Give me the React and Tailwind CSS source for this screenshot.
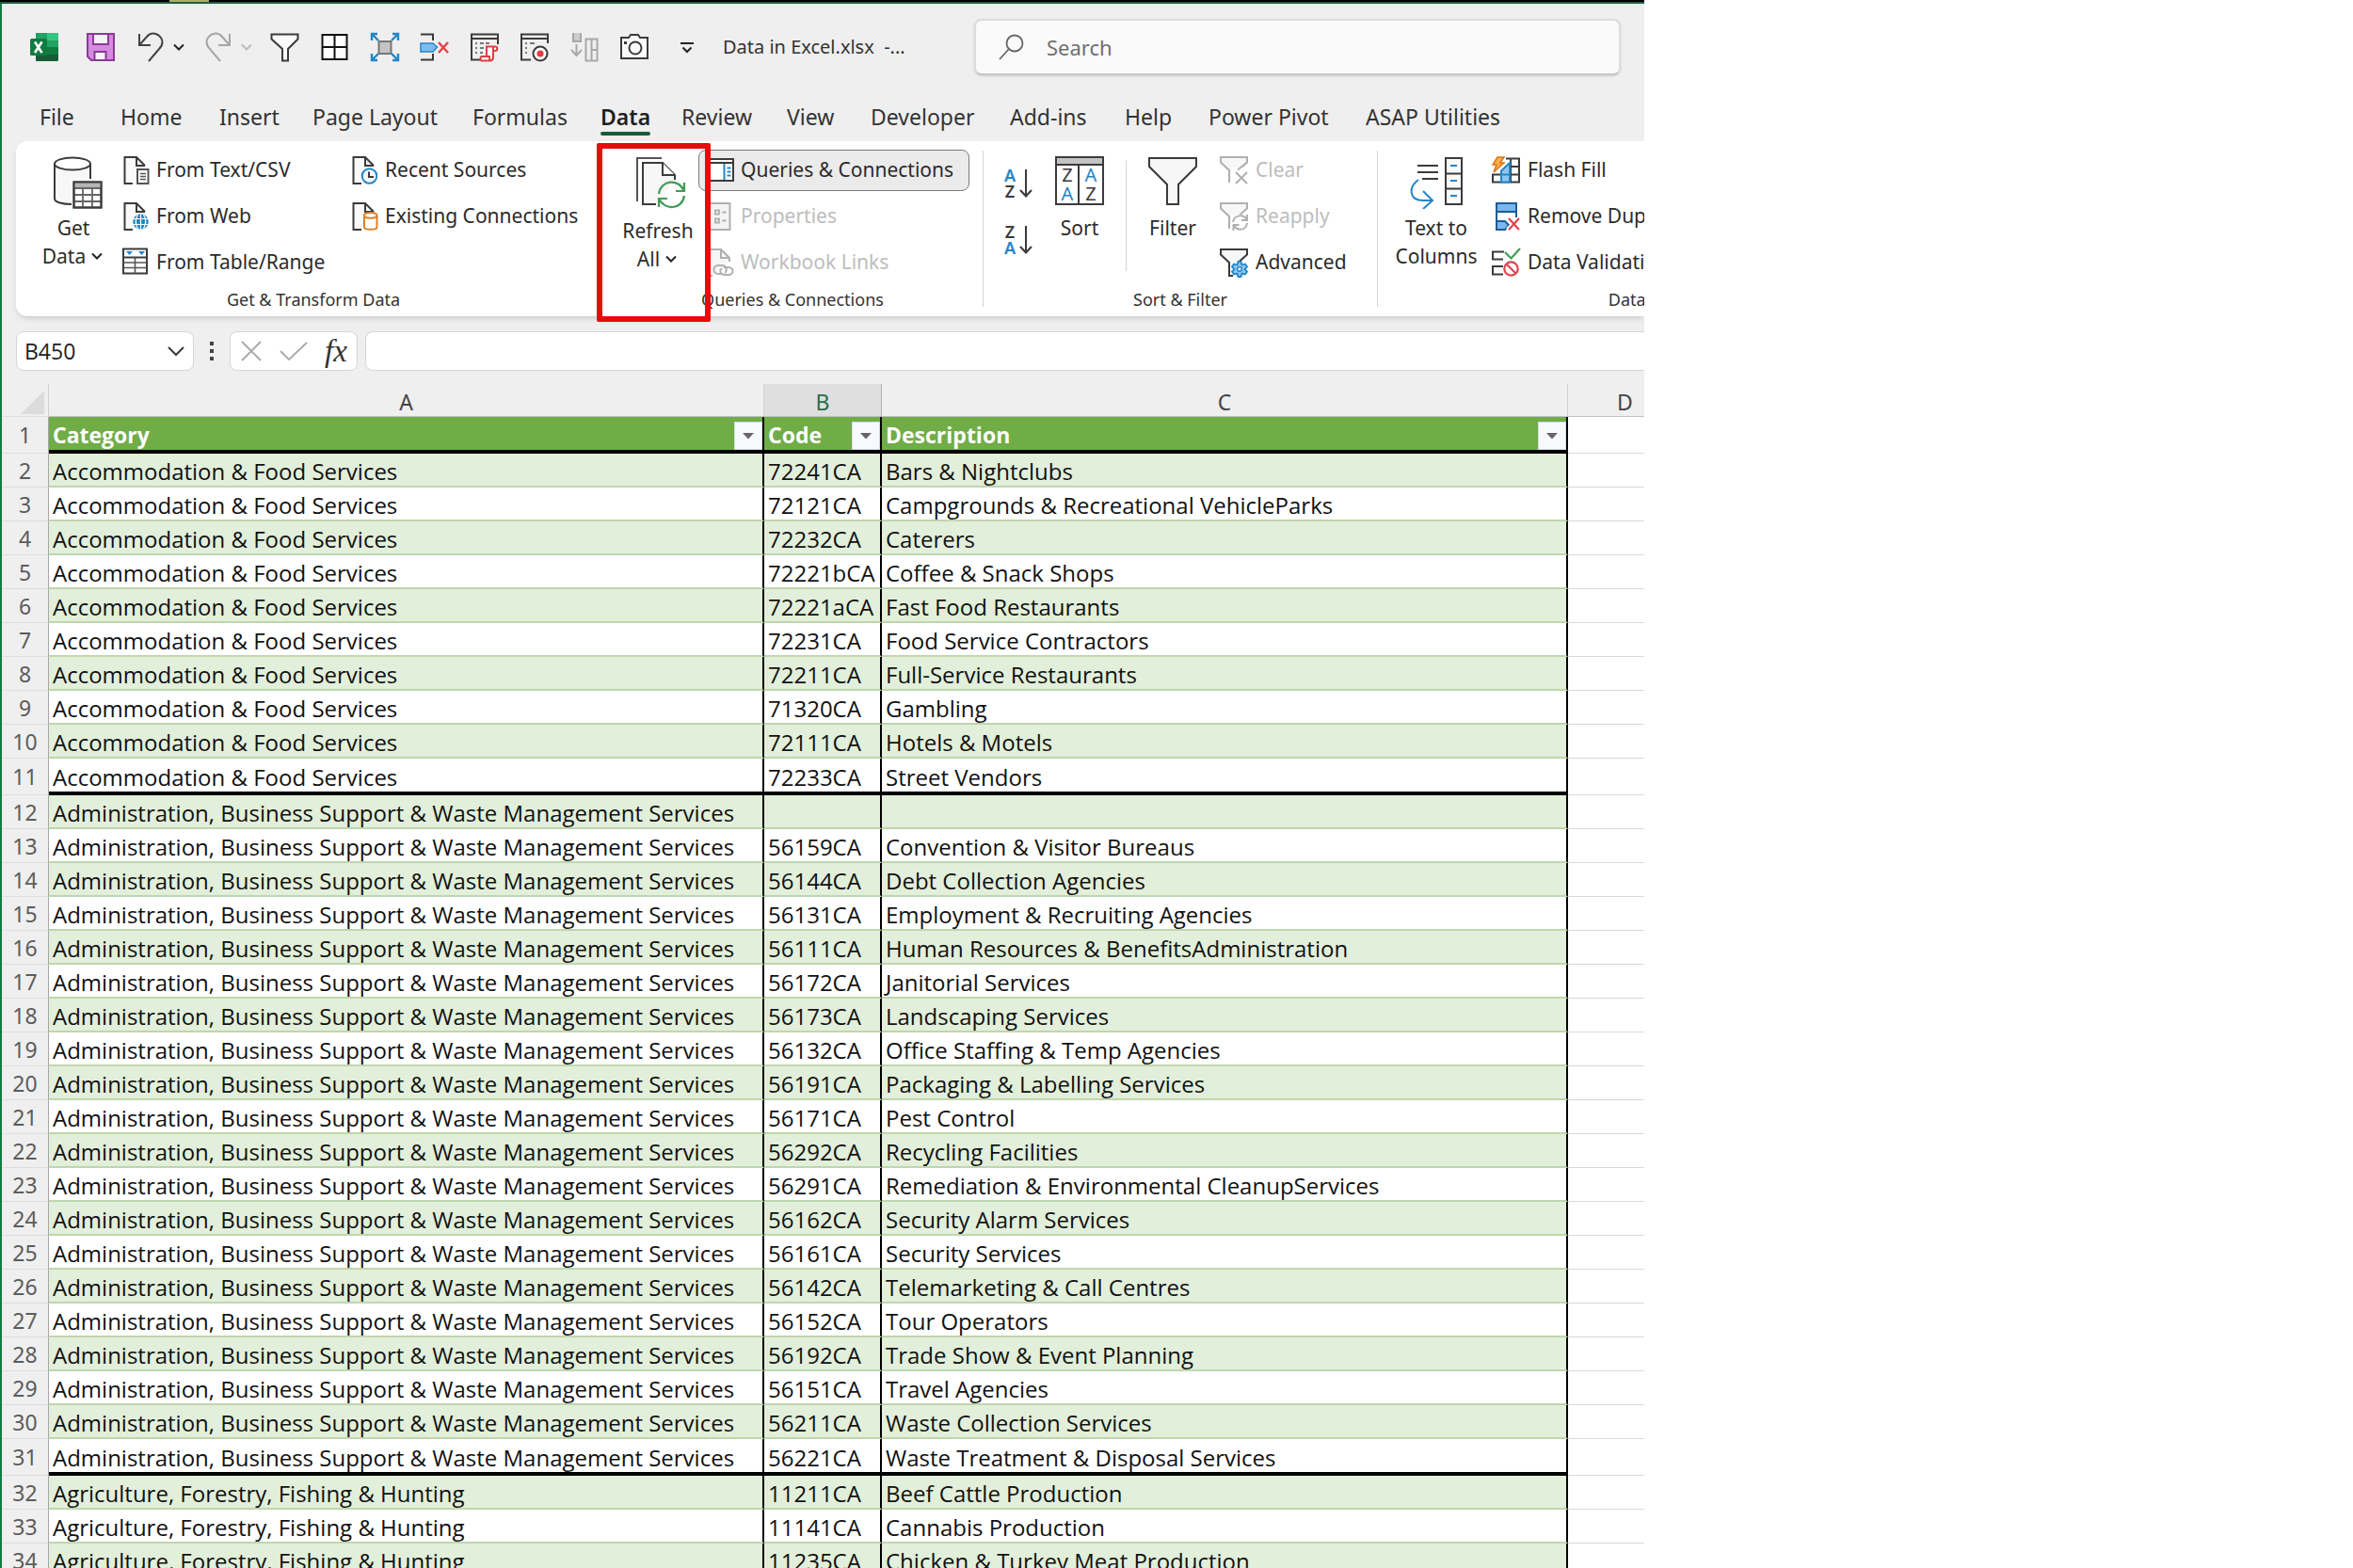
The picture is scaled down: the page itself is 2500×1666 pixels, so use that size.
import React from "react";

const INK = "#3b3b3b";
const BLUE = "#2485c7";
const GREY = "#b0b0b0";

function Svg({ w = 32, h = 32, children, className = "", sw = 2 }) {
  return (
    <svg
      width={w}
      height={h}
      viewBox={`0 0 ${w} ${h}`}
      fill="none"
      stroke={INK}
      strokeWidth={sw}
      className={"shrink-0 " + className}
      aria-hidden="true"
    >
      {children}
    </svg>
  );
}

const Chevron = ({ color = "#222", w = 16, sw = 2 }) => (
  <Svg w={w} h={10} sw={sw}>
    <path d={`M${w / 2 - 5} 2.5l5 5 5-5`} stroke={color} />
  </Svg>
);

/* ---------- title bar icons ---------- */

const ExcelLogo = () => (
  <Svg sw={0}>
    <path d="M8 1h22a1 1 0 0 1 1 1v28a1 1 0 0 1-1 1H8a1 1 0 0 1-1-1V2a1 1 0 0 1 1-1z" fill="#185c37" />
    <path d="M7 1h12v8H7z" fill="#21a366" />
    <path d="M19 1h11a1 1 0 0 1 1 1v7H19z" fill="#33c481" />
    <path d="M7 9h12v7H7z" fill="#107c41" />
    <path d="M19 9h12v7H19z" fill="#21a366" />
    <path d="M19 16h12v8H19z" fill="#107c41" />
    <rect x="1" y="7" width="18" height="18" rx="1.5" fill="#107c41" />
    <path d="M6 10.500l7.500 11.500M13.500 10.500L6 22" stroke="#fff" strokeWidth="2.600" />
  </Svg>
);

const SaveIcon = () => (
  <Svg>
    <path d="M2 2h28v28H6l-4-4z" fill="#d58be0" stroke="#8a3a96" />
    <path d="M8 2h16v11H8zM9.500 30v-9h12v9z" fill="#f6f0f8" stroke="#8a3a96" />
  </Svg>
);

const UndoIcon = () => (
  <Svg>
    <path d="M4 2v12h12M4 14L12 5c5-6 12-3 15 1 3 5 1 9-2 12L14 31" stroke="#444" />
  </Svg>
);

const RedoIcon = () => (
  <Svg>
    <path d="M28 2v12H16M28 14L20 5C15-1 8 2 5 6c-3 5-1 9 2 12l11 13" stroke="#a6a6a6" />
  </Svg>
);

const FunnelIcon = () => (
  <Svg>
    <path d="M1.500 2.500h28v5L19 18v12.500h-6V18L1.500 7.500z" fill="#fafafa" />
  </Svg>
);

const BordersIcon = () => (
  <Svg>
    <path d="M2.500 3h26v26h-26zM15.500 3v26M2.500 16h26" stroke="#111" fill="#fff" />
  </Svg>
);

const ExpandIcon = () => (
  <Svg>
    <rect x="9.500" y="10" width="13" height="13" fill="#c4c4c4" stroke="#777" />
    <path
      d="M2 9V2h6M2 2l7 7M30 9V2h-6M30 2l-7 7M2 23v7h6M2 30l7-7M30 23v7h-6M30 30l-7-7"
      stroke={BLUE}
      strokeWidth="2.400"
    />
  </Svg>
);

const DeleteRowIcon = () => (
  <Svg>
    <path d="M1 2.500h13V9M1 29.500h13V23" />
    <path d="M1 12h13l4.500 4-4.500 5H1z" fill="#7fbcec" stroke={BLUE} strokeWidth="1.500" />
    <path d="M20 11l10 11M30 11L20 22" stroke="#e0434b" strokeWidth="2.400" />
  </Svg>
);

const SheetBase = () => (
  <>
    <path d="M12 29.500H2v-27h28V13M2 7h28" />
    <path d="M6 12h2M11 12h4M17 12h4M6 17h2M11 17h4M6 22h2M11 22h3" stroke="#777" />
  </>
);

const MacroIcon = () => (
  <Svg>
    <SheetBase />
    <path d="M18 26V15.500h9c3 0 3 4.500 0 4.500h-2v7c0 3-3 3.500-3 3.500h-9c-2 0-2-4.500 0-4.500h8c0 2 0 4 1 4.500M25 20v-4" stroke="#dd3f45" fill="#fff" />
  </Svg>
);

const RecordIcon = () => (
  <Svg>
    <path d="M12 29.500H2v-27h28V12M2 7h28" />
    <path d="M6 12h2M11 12h5M6 17h2M6 22h2" stroke="#777" />
    <circle cx="22" cy="23" r="7.500" fill="#fff" />
    <circle cx="22" cy="23" r="3.600" fill="#dd3f45" stroke="none" />
  </Svg>
);

const FillDownIcon = () => (
  <Svg>
    <path d="M4 1v9h8V1" fill="#ccc" stroke="#a8a8a8" />
    <path d="M7.500 13v11M2 19l5.500 6 5.500-6M17.500 7.500h12v23h-12zM23.500 7.500v23M23.500 19h6" stroke="#a8a8a8" />
  </Svg>
);

const CameraIcon = () => (
  <Svg>
    <path d="M2 6h8l2-3h8l2 3h8v22H2z" fill="#fafafa" />
    <circle cx="17" cy="17" r="6.500" />
    <rect x="5" y="10" width="3" height="3" fill={INK} stroke="none" />
  </Svg>
);

const CustomizeIcon = () => (
  <Svg w={16} h={16}>
    <path d="M1 4h14M3.500 8.500l4.500 4.500 4.500-4.500" stroke="#222" />
  </Svg>
);

/* ---------- ribbon icons ---------- */

const Doc = ({ color = INK }) => (
  <>
    <path d="M11 30H2.500V2H15l9 9" fill="#fafafa" stroke={color} />
    <path d="M15 2v9h9" stroke={color} />
  </>
);

const TextCsvIcon = () => (
  <Svg>
    <Doc />
    <rect x="16" y="15" width="11.500" height="15" fill="#fff" stroke="#555" />
    <path d="M19 19.500h6M19 22.500h6M19 25.500h6" stroke="#555" strokeWidth="1.300" />
  </Svg>
);

const WebIcon = () => (
  <Svg>
    <Doc />
    <circle cx="19.500" cy="21.500" r="9.500" fill="#fff" stroke="none" />
    <circle cx="19.500" cy="21.500" r="8.300" fill={BLUE} stroke="none" />
    <path
      d="M11.500 18.500h16M11.500 24.500h16M19.500 13v17M16.500 14c-3 5-3 10 0 15M22.500 14c3 5 3 10 0 15"
      stroke="#fff"
      strokeWidth="1.200"
    />
  </Svg>
);

const TableRangeIcon = () => (
  <Svg sw={1.6}>
    <path d="M1 1.500h25v26H1z" fill="#fff" strokeWidth="2" />
    <path d="M1 10.500h25" strokeWidth="2" />
    <path d="M1 16h25M1 21.500h25M13.500 10.500v17" stroke="#555" />
    <path d="M4 4h7l-3.500 4zM17 4h7l-3.500 4z" fill={BLUE} stroke="none" />
  </Svg>
);

const RecentIcon = () => (
  <Svg>
    <Doc />
    <circle cx="19.500" cy="22" r="9" fill="#fff" stroke="none" />
    <circle cx="19.500" cy="22" r="7.800" fill="#f3f9ff" stroke={BLUE} />
    <path d="M19 17.500V23h5" />
  </Svg>
);

const ConnectionsIcon = () => (
  <Svg>
    <Doc />
    <path
      d="M14 15c0-4 13.500-4 13.500 0v12.500c0 3-13.500 3-13.500 0z"
      fill="#fff"
      stroke="#d9822b"
    />
    <path d="M14 15c0 3.500 13.500 3.500 13.500 0" stroke="#d9822b" />
  </Svg>
);

const GetDataIcon = () => (
  <Svg w={56} h={56} className="ml-2">
    <path d="M4 7v39c0 4 9 6 18 5V26h20V7" fill="#f7f7f7" stroke="none" />
    <ellipse cx="23" cy="8" rx="19" ry="6.500" fill="#fff" />
    <path d="M4 8v37c0 4 9 6 18 6M42 8v16" />
    <rect x="24.500" y="27.500" width="29" height="27" fill="#fff" />
    <path d="M25 28h28v5H25z" fill="#b5b5b5" stroke="none" />
    <path d="M24 34h30M24 41h30M24 48h30M34 34v20M44 34v20" stroke="#666" strokeWidth="1.800" />
    <rect x="24.500" y="27.500" width="29" height="27" />
  </Svg>
);

const RefreshIcon = () => (
  <Svg w={56} h={56} className="ml-1">
    <path d="M4 48V2h26" stroke="#555" />
    <path d="M24 51H10V7h21l13 13v5" fill="#f7f7f7" />
    <path d="M31 7v13h13" fill="#fff" />
    <path
      d="M27 40c2-15 21-17 27-3M54 28v9h-9M54 42c-2 15-21 16-27 3M27 54v-9h9"
      stroke="#3f9b56"
      strokeWidth="2.200"
      fill="none"
    />
  </Svg>
);

const PaneIcon = () => (
  <Svg>
    <path d="M1 4h27v23H1z" fill="#fff" />
    <path d="M1 8h27" />
    <path d="M18.500 9v17" stroke={BLUE} />
    <path d="M21.500 13.500h4M21.500 17.500h4M21.500 21.500h4" stroke={BLUE} />
  </Svg>
);

const PropertiesIcon = () => (
  <Svg>
    <path d="M2 2h22.500v28H2z" fill="#f4f4f4" stroke={GREY} />
    <path d="M9 9.500h4v4H9zM9 18.500h4v4H9zM16.500 11.500h4M16.500 20.500h4" stroke={GREY} strokeWidth="1.800" />
  </Svg>
);

const LinksIcon = () => (
  <Svg>
    <path d="M6 30H2V2h13l9 9v4" fill="#f6f6f6" stroke={GREY} />
    <path d="M15 2v9h9" stroke={GREY} />
    <path d="M17 28h-5c-6 0-6-9 0-9h4c5 0 6 6 3 8M18 21h5c6 0 6 8 0 8h-4c-5 0-6-5-3-7" stroke={GREY} />
  </Svg>
);

/* The sort icons carry live letters beside the arrow. */
const SortOrder = ({ top, bottom, topClass, bottomClass }) => (
  <span className="flex items-center gap-1">
    <span className="flex flex-col text-[18px] leading-[17px] font-semibold">
      <span className={topClass}>{top}</span>
      <span className={bottomClass}>{bottom}</span>
    </span>
    <Svg w={14} h={32}>
      <path d="M7 1v28M1 23l6 6.500 6-6.500" />
    </Svg>
  </span>
);

const SortDialogIcon = () => (
  <span className="flex h-13 w-13 flex-col border-2 border-[#3b3b3b] bg-white">
    <span className="h-2 border-b-2 border-[#3b3b3b] bg-[#c4c4c4]" />
    <span className="grid flex-1 grid-cols-2 text-center text-[20px] leading-5 text-[#3b3b3b]">
      <span className="flex flex-col border-r-2 border-[#3b3b3b]">
        <span>Z</span>
        <span className="text-[#2485c7]">A</span>
      </span>
      <span className="flex flex-col">
        <span className="text-[#2485c7]">A</span>
        <span>Z</span>
      </span>
    </span>
  </span>
);

const BigFunnelIcon = () => (
  <Svg w={56} h={56}>
    <path d="M3 2h50v9L34 30v21H22V30L3 11z" fill="#f7f7f7" />
  </Svg>
);

const SmallFunnel = ({ color }) => (
  <path d="M11 29V16L2 7.500V2h28v5.500l-9 8" fill="#f7f7f7" stroke={color} />
);

const ClearIcon = () => (
  <Svg>
    <SmallFunnel color={GREY} />
    <path d="M13 13h14v17H13z" fill="#fff" stroke="none" />
    <path d="M30 7.500l-10 8M18 18l12 12M30 18L18 30" stroke={GREY} />
  </Svg>
);

const ReapplyIcon = () => (
  <Svg>
    <SmallFunnel color={GREY} />
    <path d="M13 14h18v17H13z" fill="#fff" stroke="none" />
    <path d="M15 22c1-8 12-9 15-2M30 14v6h-6M30 23c-1 8-11 9-14 2M15.500 31v-6h6" stroke={GREY} />
  </Svg>
);

const AdvancedIcon = () => (
  <Svg>
    <SmallFunnel color={INK} />
    <path d="M13 14h18v17H13z" fill="#fff" stroke="none" />
    <path d="M11 17v13h4" />
    <path
      d="M20.500 15h3l1 3.500 3.500-1 2 3-2.500 2.500 2.500 2.500-2 3-3.500-1-1 3.500h-3l-1-3.500-3.500 1-2-3 2.500-2.500-2.500-2.500 2-3 3.500 1z"
      fill="#8cc5f0"
      stroke={BLUE}
      strokeWidth="1.800"
    />
    <circle cx="22" cy="23" r="2.200" fill="#fff" stroke={BLUE} strokeWidth="1.500" />
  </Svg>
);

const TextToColumnsIcon = () => (
  <Svg w={60} h={56}>
    <path d="M10 10h22M10 17h22M15 24h17" />
    <path d="M11 25C0 33 1 47 16 47h9M16 37l10 10-10 9" stroke={BLUE} />
    <path d="M40 2h17v49H40zM40 18.500h17M40 34.500h17" fill="#fafafa" />
    <path d="M45 10h7M45 26h7M45 42h7" stroke={BLUE} />
  </Svg>
);

const FlashFillIcon = () => (
  <Svg>
    <path d="M16 3.500h14v25H2v-8h28M21 3.500v25M11 20v8M21 12h9" fill="none" />
    <path d="M11 28.500v-12L20 8v20.500z" fill="#8cc5f0" stroke={BLUE} />
    <path d="M11 20.500h10" stroke={BLUE} />
    <path d="M7 2h7l-4 6h4L3 18l3-8H2z" fill="#f7b04a" stroke="#d9761b" strokeWidth="1.500" />
  </Svg>
);

const RemoveDupIcon = () => (
  <Svg>
    <path d="M6 2h21v9H6z" fill="#78b8ef" stroke="#1f5c94" />
    <path d="M27 11v6M6 11v10" stroke="#1f5c94" />
    <path d="M6 21h9l4 4-4 5H6z" fill="#78b8ef" stroke="#1f5c94" />
    <path d="M18 18l13 12M31 18L18 30" stroke="#fff" strokeWidth="5" />
    <path d="M19 18l11 12M30 18L19 30" stroke="#e0434b" strokeWidth="2.200" />
  </Svg>
);

const ValidationIcon = () => (
  <Svg>
    <path d="M14 4.500H2v8h11M13 20H2v8.500h11" />
    <path d="M15 5l6.500 6.500L31 1" stroke="#3f9b56" strokeWidth="2.200" />
    <circle cx="21.500" cy="22.500" r="7.200" stroke="#e0434b" strokeWidth="2.200" fill="#fff" />
    <path d="M16.500 17.500l10 10" stroke="#e0434b" strokeWidth="2.200" />
  </Svg>
);

/* ---------- ribbon pieces ---------- */

function RibbonGroup({ label, className, children }) {
  return (
    <section className={"flex shrink-0 flex-col " + className} aria-label={label}>
      <div className="flex h-[150px] items-start">{children}</div>
      <h2 className="h-9 text-center text-[18px] leading-9 text-[#333]">{label}</h2>
    </section>
  );
}

function SmallButton({ icon, children, disabled, active, gap = "gap-1", pad = "" }) {
  return (
    <button
      type="button"
      disabled={disabled}
      className={
        "flex h-11 items-center text-[21px] whitespace-nowrap " +
        gap +
        " " +
        pad +
        (disabled ? " text-[#bdbdbd]" : " text-[#2b2b2b]") +
        (active ? " rounded-lg border border-[#7a7a7a] bg-[#ebebeb]" : "")
      }
    >
      {icon}
      {children}
    </button>
  );
}

const Stack = ({ className, children }) => (
  <div className={"grid shrink-0 grid-rows-[49px_49px_49px] items-center pt-1.5 " + className}>{children}</div>
);

function BigButton({ icon, className, textClass = "mt-[5px]", children }) {
  return (
    <button
      type="button"
      className={"flex shrink-0 flex-col items-center pt-4 text-[21px] leading-[30px] text-[#2b2b2b] " + className}
    >
      {icon}
      <span className={"block whitespace-nowrap " + textClass}>{children}</span>
    </button>
  );
}

/* ---------- sheet data ---------- */

const FOOD = "Accommodation & Food Services";
const ADMIN = "Administration, Business Support & Waste Management Services";
const AGRI = "Agriculture, Forestry, Fishing & Hunting";

const ROWS = [
  [FOOD, "72241CA", "Bars & Nightclubs"],
  [FOOD, "72121CA", "Campgrounds & Recreational VehicleParks"],
  [FOOD, "72232CA", "Caterers"],
  [FOOD, "72221bCA", "Coffee & Snack Shops"],
  [FOOD, "72221aCA", "Fast Food Restaurants"],
  [FOOD, "72231CA", "Food Service Contractors"],
  [FOOD, "72211CA", "Full-Service Restaurants"],
  [FOOD, "71320CA", "Gambling"],
  [FOOD, "72111CA", "Hotels & Motels"],
  [FOOD, "72233CA", "Street Vendors"],
  [ADMIN, "", ""],
  [ADMIN, "56159CA", "Convention & Visitor Bureaus"],
  [ADMIN, "56144CA", "Debt Collection Agencies"],
  [ADMIN, "56131CA", "Employment & Recruiting Agencies"],
  [ADMIN, "56111CA", "Human Resources & BenefitsAdministration"],
  [ADMIN, "56172CA", "Janitorial Services"],
  [ADMIN, "56173CA", "Landscaping Services"],
  [ADMIN, "56132CA", "Office Staffing & Temp Agencies"],
  [ADMIN, "56191CA", "Packaging & Labelling Services"],
  [ADMIN, "56171CA", "Pest Control"],
  [ADMIN, "56292CA", "Recycling Facilities"],
  [ADMIN, "56291CA", "Remediation & Environmental CleanupServices"],
  [ADMIN, "56162CA", "Security Alarm Services"],
  [ADMIN, "56161CA", "Security Services"],
  [ADMIN, "56142CA", "Telemarketing & Call Centres"],
  [ADMIN, "56152CA", "Tour Operators"],
  [ADMIN, "56192CA", "Trade Show & Event Planning"],
  [ADMIN, "56151CA", "Travel Agencies"],
  [ADMIN, "56211CA", "Waste Collection Services"],
  [ADMIN, "56221CA", "Waste Treatment & Disposal Services"],
  [AGRI, "11211CA", "Beef Cattle Production"],
  [AGRI, "11141CA", "Cannabis Production"],
  [AGRI, "11235CA", "Chicken & Turkey Meat Production"],
];

const TABS = [
  "File", "Home", "Insert", "Page Layout", "Formulas", "Data", "Review", "View",
  "Developer", "Add-ins", "Help", "Power Pivot", "ASAP Utilities",
];

const QUICK = [
  ["Filter", FunnelIcon],
  ["Borders", BordersIcon],
  ["Select current region", ExpandIcon],
  ["Delete rows", DeleteRowIcon],
  ["Macros", MacroIcon],
  ["Record macro", RecordIcon],
  ["Fill down", FillDownIcon],
  ["Camera", CameraIcon],
];

function TitleBar() {
  return (
    <header className="flex h-[88px] items-center pl-[29px]">
      <ExcelLogo />
      <button type="button" aria-label="Save" className="ml-7"><SaveIcon /></button>
      <button type="button" aria-label="Undo" className="ml-[21px] flex items-center gap-1.5">
        <UndoIcon />
        <Chevron />
      </button>
      <button type="button" aria-label="Redo" className="ml-[18px] flex items-center gap-1.5">
        <RedoIcon />
        <Chevron color="#bbb" />
      </button>
      <div className="ml-[17px] flex gap-[21px]">
        {QUICK.map(([name, Icon]) => (
          <button key={name} type="button" aria-label={name}><Icon /></button>
        ))}
      </div>
      <button type="button" aria-label="Customize toolbar" className="ml-8"><CustomizeIcon /></button>
      <h1 className="ml-[30px] w-[267px] shrink-0 text-[20px] whitespace-pre text-[#333]">{"Data in Excel.xlsx  -..."}</h1>
      <label className="mr-[25px] flex h-[60px] min-w-0 flex-1 items-center gap-6 rounded-lg border-2 border-[#dcdcdc] border-b-[#c6c6c6] bg-[#fafafa] pl-6 shadow-sm">
        <Svg w={27} h={28} sw={1.8}>
          <circle cx="17" cy="10" r="8.500" stroke="#666" />
          <path d="M11 16L1 27" stroke="#666" />
        </Svg>
        <input
          type="search"
          aria-label="Search"
          placeholder="Search"
          className="min-w-0 flex-1 bg-transparent text-[22px] outline-none placeholder:text-[#707070]"
        />
      </label>
    </header>
  );
}

function Tabs() {
  return (
    <nav
      aria-label="Ribbon tabs"
      className="grid grid-cols-[86px_105px_99px_170px_136px_86px_112px_89px_148px_122px_89px_167px_auto] justify-start pt-3.5 pb-1.5 pl-10"
    >
      {TABS.map((t) => (
        <button
          key={t}
          type="button"
          className={
            "justify-self-start text-[23px] leading-8 whitespace-nowrap " +
            (t === "Data" ? "font-semibold text-[#1f1f1f]" : "text-[#333]")
          }
        >
          {t}
          <span className={"block h-1 rounded-full " + (t === "Data" ? "bg-[#185c37]" : "")} />
        </button>
      ))}
    </nav>
  );
}

function Ribbon() {
  return (
    <div className="ml-[15px] flex rounded-l-xl bg-white shadow-md">
      <RibbonGroup label="Get & Transform Data" className="w-[623px] pl-[9px]">
        <BigButton icon={<GetDataIcon />} className="w-[104px]">
          Get
          <span className="flex items-center gap-1">Data <Chevron /></span>
        </BigButton>
        <Stack className="w-[243px]">
          <SmallButton icon={<TextCsvIcon />}>From Text/CSV</SmallButton>
          <SmallButton icon={<WebIcon />}>From Web</SmallButton>
          <SmallButton icon={<TableRangeIcon />}>From Table/Range</SmallButton>
        </Stack>
        <Stack className="w-[260px]">
          <SmallButton icon={<RecentIcon />}>Recent Sources</SmallButton>
          <SmallButton icon={<ConnectionsIcon />}>Existing Connections</SmallButton>
        </Stack>
      </RibbonGroup>

      <RibbonGroup label="Queries & Connections" className="relative w-[404px]">
        <BigButton icon={<RefreshIcon />} className="w-[102px] pl-4" textClass="mt-2">
          Refresh
          <span className="flex items-center justify-center gap-1">All <Chevron /></span>
        </BigButton>
        <Stack className="w-[288px]">
          <SmallButton icon={<PaneIcon />} active pad="pl-2">Queries &amp; Connections</SmallButton>
          <SmallButton icon={<PropertiesIcon />} disabled pad="pl-[9px]">Properties</SmallButton>
          <SmallButton icon={<LinksIcon />} disabled pad="pl-[9px]">Workbook Links</SmallButton>
        </Stack>
        <div className="pointer-events-none absolute top-0.5 -left-1.5 h-[190px] w-[121px] rounded-xs border-6 border-[#ea0a0c]" />
      </RibbonGroup>

      <div className="mt-2.5 h-[166px] w-px shrink-0 bg-[#d4d4d4]" />

      <RibbonGroup label="Sort & Filter" className="w-[418px]">
        <div className="flex w-[66px] shrink-0 flex-col items-start gap-[26px] pt-7 pl-[22px]">
          <button type="button" aria-label="Sort A to Z">
            <SortOrder top="A" bottom="Z" topClass="text-[#2485c7]" bottomClass="text-[#3b3b3b]" />
          </button>
          <button type="button" aria-label="Sort Z to A">
            <SortOrder top="Z" bottom="A" topClass="text-[#3b3b3b]" bottomClass="text-[#2485c7]" />
          </button>
        </div>
        <BigButton icon={<SortDialogIcon />} className="w-[72px]" textClass="mt-[9px]">Sort</BigButton>
        <div className="mt-5 ml-[13px] h-[118px] w-px shrink-0 bg-[#d4d4d4]" />
        <BigButton icon={<BigFunnelIcon />} className="w-[98px]">Filter</BigButton>
        <Stack className="w-[150px]">
          <SmallButton icon={<ClearIcon />} gap="gap-[7px]" disabled>Clear</SmallButton>
          <SmallButton icon={<ReapplyIcon />} gap="gap-[7px]" disabled>Reapply</SmallButton>
          <SmallButton icon={<AdvancedIcon />} gap="gap-[7px]">Advanced</SmallButton>
        </Stack>
      </RibbonGroup>

      <div className="mt-2.5 h-[166px] w-px shrink-0 bg-[#d4d4d4]" />

      <RibbonGroup label="Data Tools" className="w-[578px]">
        <BigButton icon={<TextToColumnsIcon />} className="w-[120px] pl-1">
          Text to
          <br />
          Columns
        </BigButton>
        <Stack className="w-[240px]">
          <SmallButton icon={<FlashFillIcon />} gap="gap-[7px]">Flash Fill</SmallButton>
          <SmallButton icon={<RemoveDupIcon />} gap="gap-[7px]">Remove Duplicates</SmallButton>
          <SmallButton icon={<ValidationIcon />} gap="gap-[7px]">Data Validation</SmallButton>
        </Stack>
      </RibbonGroup>
    </div>
  );
}

function FormulaBar() {
  return (
    <div className="flex items-center py-4 pb-3.5 pl-[15px]">
      <div className="flex h-[42px] w-[189px] shrink-0 items-center rounded-lg border border-[#d6d6d6] bg-white pr-2 pl-2">
        <input aria-label="Name box" defaultValue="B450" className="min-w-0 flex-1 font-[Open_Sans,sans-serif] text-[23px] text-[#222] outline-none" />
        <button type="button" aria-label="Show names">
          <Svg w={20} h={14} sw={2}><path d="M2 3l8 8 8-8" /></Svg>
        </button>
      </div>
      <Svg w={38} h={24} sw={0}>
        <path d="M17 2h4v4h-4zM17 10h4v4h-4zM17 18h4v4h-4z" fill="#444" />
      </Svg>
      <div className="flex h-[42px] w-[136px] shrink-0 items-center gap-[18px] rounded-lg border border-[#d6d6d6] bg-white pl-2.5">
        <button type="button" aria-label="Cancel">
          <Svg w={24} h={24} sw={1.8}><path d="M2 2l20 20M22 2L2 22" stroke="#a8a8a8" /></Svg>
        </button>
        <button type="button" aria-label="Enter">
          <Svg w={30} h={24} sw={1.8}><path d="M1 12l9 9L29 3" stroke="#a8a8a8" /></Svg>
        </button>
        <button type="button" aria-label="Insert function" className="font-[Liberation_Serif,serif] text-[33px] leading-8 text-[#333] italic">
          fx
        </button>
      </div>
      <input aria-label="Formula bar" className="ml-2 h-[42px] min-w-0 flex-1 rounded-l-lg border border-r-0 border-[#d6d6d6] bg-white px-3 text-[23px] outline-none" />
    </div>
  );
}

function HeaderCell({ children }) {
  return (
    <th scope="col" className="h-[39px] border-r-2 border-b-4 border-black bg-[#70ad47] p-0 text-left text-[23px] font-bold text-white">
      <div className="flex h-[35px] items-end justify-between pl-1">
        <span className="leading-8">{children}</span>
        <button
          type="button"
          aria-label={"Filter " + children}
          className="flex h-[30px] w-[30px] items-center justify-center border border-[#d5dbe6] bg-[#f7f9fd]"
        >
          <Svg w={12} h={8} sw={0}><path d="M0 1h12L6 7.500z" fill="#666" /></Svg>
        </button>
      </div>
    </th>
  );
}

function Sheet() {
  const rowHead = "border-r border-b border-r-[#a6a6a6] border-b-[#dedede] bg-[#efefef] p-0 text-center font-[Noto_Sans,sans-serif] text-[23px] font-normal text-[#5c5c5c]";
  const colHead = "h-[35px] border-b border-b-[#bfbfbf] p-0 pt-1 font-[Noto_Sans,sans-serif] text-[23px] leading-[30px] font-normal";
  return (
    <table className="w-full table-fixed border-separate border-spacing-0 font-[Open_Sans,sans-serif] text-[24px] leading-[30px] whitespace-nowrap text-[#111]">
      <colgroup>
        <col className="w-[50px]" />
        <col className="w-[760px]" />
        <col className="w-[125px]" />
        <col className="w-[729px]" />
        <col />
      </colgroup>
      <thead>
        <tr>
          <th className="border-r border-b border-r-[#d0d0d0] border-b-[#dedede] p-0">
            <svg width="25" height="25" viewBox="0 0 25 25" className="mt-1 ml-5 block" aria-hidden="true">
              <path d="M25 0v25H0z" fill="#dcdcdc" />
            </svg>
          </th>
          <th className={colHead + " border-r border-r-[#d0d0d0] text-[#444]"}>A</th>
          <th className={colHead + " border-r border-r-[#b0b0b0] border-b-[#1e7145] bg-[#dfdfdf] text-[#2c6e4b]"}>B</th>
          <th className={colHead + " border-r border-r-[#d0d0d0] text-[#444]"}>C</th>
          <th className={colHead + " pl-[52px] text-left text-[#444]"}>D</th>
        </tr>
      </thead>
      <tbody>
        <tr>
          <th scope="row" className={rowHead}>1</th>
          <HeaderCell>Category</HeaderCell>
          <HeaderCell>Code</HeaderCell>
          <HeaderCell>Description</HeaderCell>
          <td className="border-b border-[#d9d9d9] bg-white p-0" />
        </tr>
        {ROWS.map(([cat, code, desc], i) => {
          const next = ROWS[i + 1];
          const groupEnd = next && next[0] !== cat;
          const cell =
            "p-0 pl-1 pt-1 border-r-2 border-r-black " +
            (groupEnd ? "h-[39px] border-b-4 border-b-black " : "h-[36px] border-b-2 border-b-[#bfd6ae] ") +
            (i % 2 === 0 ? "bg-[#e2efda]" : "bg-white");
          return (
            <tr key={i}>
              <th scope="row" className={rowHead}>{i + 2}</th>
              <td className={cell}>{cat}</td>
              <td className={cell}>{code}</td>
              <td className={cell}>{desc}</td>
              <td className="border-b border-[#d9d9d9] bg-white p-0" />
            </tr>
          );
        })}
      </tbody>
    </table>
  );
}

export default function App() {
  return (
    <div className="grid h-screen grid-cols-[1747fr_753fr] grid-rows-[minmax(0,1fr)] overflow-hidden bg-white font-[Noto_Sans,sans-serif]">
      <main className="flex min-w-0 flex-col overflow-hidden">
        <div className="h-0.5 shrink-0 bg-black">
          <div className="ml-[180px] h-full w-[42px] bg-[#a9b06a]" />
        </div>
        <div className="h-0.5 shrink-0 bg-[#225c41]" />
        <div className="min-h-0 flex-1 overflow-hidden border-l-2 border-[#107c41] bg-[#efefef]">
          <div className="h-0.5 bg-[#dff7ea]" />
          <TitleBar />
          <Tabs />
          <Ribbon />
          <FormulaBar />
          <Sheet />
        </div>
      </main>
    </div>
  );
}
